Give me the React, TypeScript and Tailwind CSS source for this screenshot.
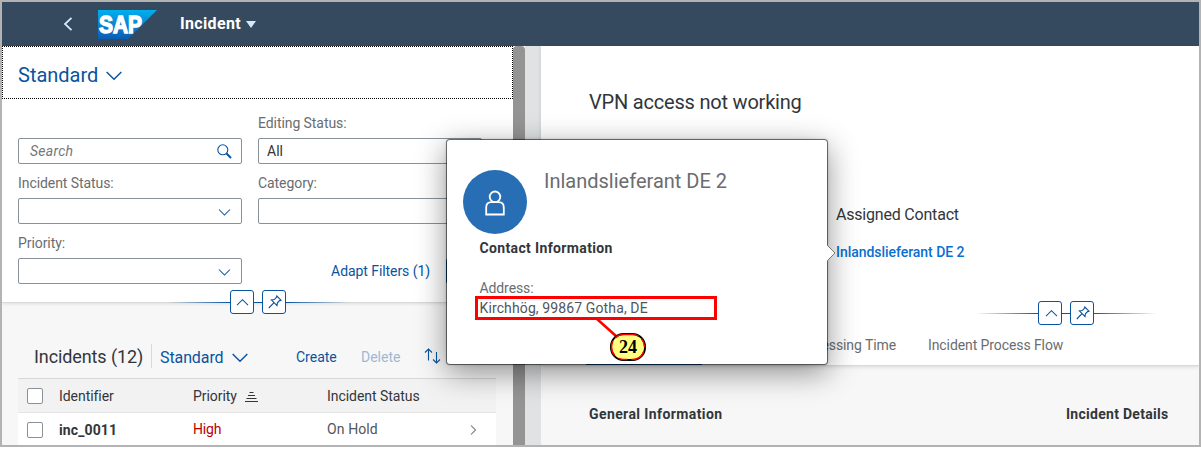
import React from 'react';

function Chevron({ className, d = 'M1 1.5 L6.5 7 L12 1.5', box = '0 0 13 9' }: { className: string; d?: string; box?: string }) {
  return (
    <svg viewBox={box} className={className} fill="none" stroke="currentColor" strokeWidth="1.05">
      <path d={d} />
    </svg>
  );
}

function SapLogo() {
  return (
    <svg viewBox="0 0 59 29" className="ml-[25px] h-[29px] w-[59px]">
      <defs>
        <linearGradient id="sap" x1="0" y1="0" x2="0" y2="1">
          <stop offset="0" stopColor="#00b0ef" />
          <stop offset="0.5" stopColor="#0a86d0" />
          <stop offset="1" stopColor="#0a5cb5" />
        </linearGradient>
      </defs>
      <path d="M0 0H59L30 29H0Z" fill="url(#sap)" />
      <text x="1" y="23" fontFamily="Liberation Sans, sans-serif" fontWeight="700" fontSize="23" fill="#fff" stroke="#fff" strokeWidth="1.4" textLength="43" lengthAdjust="spacingAndGlyphs">
        SAP
      </text>
    </svg>
  );
}

function Field({ label, children }: { label?: string; children?: React.ReactNode }) {
  return (
    <div className="flex w-[224px] flex-col">
      <div className="h-[28px] pt-[3px] text-[14px] leading-[20px] tracking-[-0.07px] text-[#6a6d70]">{label}</div>
      <div className="flex h-[26px] items-center justify-between rounded-[2px] border border-[#89919a] bg-white pr-[10px] pl-[8px]">{children}</div>
    </div>
  );
}

function SelectField({ label }: { label: string }) {
  return (
    <Field label={label}>
      <span />
      <Chevron className="mt-[2px] h-[9px] w-[13px] text-[#0854a0]" />
    </Field>
  );
}

function PinIcon() {
  return (
    <svg viewBox="0 0 14 14" className="h-[14px] w-[14px]" fill="none" stroke="currentColor" strokeWidth="1.1">
      <path d="M8.8 1 L13 5.2 L11.6 5.6 L9.4 7.8 L9 10.6 L3.4 5 L6.2 4.6 L8.4 2.4 Z M5.8 7.8 L0.8 13" />
    </svg>
  );
}

function HeaderToggle() {
  return (
    <div className="flex h-[24px] w-[182px] items-center text-[#0854a0]">
      <div className="h-px flex-1 bg-linear-to-r from-transparent to-[#0854a0]" />
      <div className="flex size-[24px] items-center justify-center rounded-[3px] border border-[#0854a0] bg-white">
        <Chevron className="ml-[2px] h-[9px] w-[13px]" d="M1 7.2 L6.5 1.7 L12 7.2" />
      </div>
      <div className="h-px w-[8px] bg-[#0854a0]" />
      <div className="flex size-[24px] items-center justify-center rounded-[3px] border border-[#0854a0] bg-white pl-[2px]">
        <PinIcon />
      </div>
      <div className="h-px flex-1 bg-linear-to-r from-[#0854a0] to-transparent" />
    </div>
  );
}

function Checkbox() {
  return <span className="block size-[16px] rounded-[2px] border border-[#89919a] bg-white" />;
}

function ListPanel() {
  return (
    <div className="flex w-[511px] flex-col bg-[#f7f7f7]">
      <div className="flex h-[257px] flex-col border-b border-[#d9d9d9] bg-white shadow-[0_1px_3px_rgba(0,0,0,0.1)]">
        <div className="flex h-[53px] shrink-0 items-center border border-dotted border-black pl-[15px] text-[20px] text-[#0854a0]">
          <span className="mt-[4px]">Standard</span>
          <Chevron className="mt-[7px] ml-[7px] h-[12px] w-[18px]" />
        </div>
        <div className="grid grid-cols-[224px_224px] gap-x-[16px] gap-y-[6px] pt-[11px] pl-[16px]">
          <Field>
            <span className="ml-[3px] text-[14px] tracking-[0.25px] text-[#74777a] italic">Search</span>
            <svg viewBox="0 0 15 15" className="mr-[-1px] size-[15px]" fill="none" stroke="#0854a0">
              <circle cx="5.8" cy="5.8" r="5" strokeWidth="1.1" />
              <path d="M9.5 9.5 L14 14" strokeWidth="2" />
            </svg>
          </Field>
          <Field label="Editing Status:">
            <span className="text-[14px] text-[#32363a]">All</span>
          </Field>
          <SelectField label="Incident Status:" />
          <SelectField label="Category:" />
          <SelectField label="Priority:" />
          <div className="flex items-end justify-end">
            <span className="mr-[16px] pb-[3px] text-[14px] leading-[20px] tracking-[-0.07px] text-[#0854a0]">Adapt Filters (1)</span>
            <span className="h-[26px] w-[36px] rounded-[3px] bg-[#0854a0]" />
          </div>
        </div>
      </div>
      <div className="z-10 -mt-[13px] flex justify-center">
        <HeaderToggle />
      </div>
      <div className="mt-[20px] flex h-[44px] shrink-0 items-center pl-[32px]">
        <span className="w-[117px] text-[18px] tracking-[-0.1px] text-[#32363a]">Incidents (12)</span>
        <span className="h-[24px] w-px bg-[#d9d9d9]" />
        <span className="ml-[8px] w-[71px] pt-[3px] text-[16px] tracking-[-0.1px] text-[#0854a0]">Standard</span>
        <Chevron className="mt-[4px] h-[12px] w-[18px] text-[#0854a0]" />
        <span className="ml-[47px] w-[65px] pt-[3px] text-[14px] text-[#0854a0]">Create</span>
        <span className="w-[63px] pt-[3px] text-[14px] text-[#9fb9d3]">Delete</span>
        <svg viewBox="0 0 17 16" className="h-[16px] w-[17px]" fill="none" stroke="#0854a0" strokeWidth="1.1">
          <path d="M4.5 12.5V1 M1 4.5L4.5 1L8 4.5 M12.5 4V15 M9 11.5L12.5 15L16 11.5" />
        </svg>
      </div>
      <div className="mr-[17px] ml-[16px] flex flex-col border-t border-[#d5d7d9] text-[14px] text-[#32363a]">
        <div className="flex h-[34px] items-center border-b border-[#e4e4e4] bg-[#f2f2f2] pl-[9px]">
          <span className="w-[32px]"><Checkbox /></span>
          <span className="w-[134px] pt-[2px] tracking-[-0.05px]">Identifier</span>
          <span className="flex w-[134px] items-center gap-[8px] pt-[2px] tracking-[-0.05px]">
            Priority
            <svg viewBox="0 0 13 10" className="h-[10px] w-[13px]" stroke="#32363a" fill="none">
              <path d="M4.5 0.5H8.5 M3 3.5H10 M1.5 6.5H11.5 M0 9.5H13" />
            </svg>
          </span>
          <span className="pt-[2px] tracking-[-0.05px]">Incident Status</span>
        </div>
        <div className="flex h-[32px] items-center bg-white pt-[1px] pl-[9px]">
          <span className="w-[32px]"><Checkbox /></span>
          <span className="w-[134px] pt-[1px] font-bold tracking-[0.12px]">inc_0011</span>
          <span className="w-[134px] tracking-[-0.15px] text-[#bb0000]">High</span>
          <span className="w-[143px] tracking-[0.1px] text-[#515559]">On Hold</span>
          <Chevron className="h-[10px] w-[7px] text-[#6a6d70]" box="0 0 7 10" d="M1 0.5 L5.5 5 L1 9.5" />
        </div>
      </div>
    </div>
  );
}

function DetailPanel() {
  return (
    <div className="flex w-[658px] flex-col bg-[#f7f7f7]">
      <div className="flex h-[320px] flex-col border-b border-[#d9d9d9] bg-white shadow-[0_1px_4px_rgba(0,0,0,0.12)]">
        <div className="pt-[41px] pl-[48px] text-[20px] leading-[30px] tracking-[-0.2px] text-[#32363a]">VPN access not working</div>
        <div className="mt-[86px] pl-[295px] text-[16px] leading-[24px] tracking-[-0.2px] text-[#32363a]">Assigned Contact</div>
        <div className="mt-[15px] pl-[295px] text-[14px] leading-[20px] font-medium tracking-[-0.04px] text-[#0a6ed1]">Inlandslieferant DE 2</div>
        <div className="mt-[39px] ml-[434px]">
          <HeaderToggle />
        </div>
        <div className="flex items-start text-[14px] leading-[20px] tracking-[-0.09px] text-[#6a6d70]">
          <span className="mt-[38px] ml-[45px] h-[2px] w-[116px] bg-[#0854a0]" />
          <span className="mt-[10px] w-[194px] text-right">Processing Time</span>
          <span className="mt-[10px] ml-[32px]">Incident Process Flow</span>
        </div>
      </div>
      <div className="flex pt-[38px] pl-[48px] text-[14px] leading-[20px] font-bold text-[#32363a]">
        <span className="w-[477px] tracking-[0.4px]">General Information</span>
        <span className="tracking-[0.28px]">Incident Details</span>
      </div>
    </div>
  );
}

function ContactPopover() {
  return (
    <div className="absolute top-[139px] left-[446px] z-20 flex h-[226px] w-[382px] flex-col rounded-[4px] border border-black/50 bg-white bg-clip-padding pt-[30px] pl-[16px] shadow-[0_8px_30px_rgba(0,0,0,0.42),0_0_3px_rgba(0,0,0,0.15)]">
      <div className="flex h-[64px]">
        <div className="flex size-[64px] items-center justify-center rounded-full bg-[#286eb4]">
          <svg viewBox="0 0 20 26" className="mt-[1px] h-[26px] w-[20px]" fill="none" stroke="#fff" strokeWidth="1.8">
            <circle cx="10" cy="6.8" r="5.3" />
            <path d="M6.5 12.2 H13.5 C17 12.2 18.8 14.2 18.8 17.5 V24.5 H1.2 V17.5 C1.2 14.2 3 12.2 6.5 12.2 Z" />
          </svg>
        </div>
        <span className="-mt-[4px] ml-[17px] text-[20px] leading-[30px] text-[#6a6d70]">Inlandslieferant DE 2</span>
      </div>
      <div className="mt-[4px] pl-[16.5px] text-[14px] leading-[20px] text-[#32363a]">
        <div className="font-bold tracking-[0.36px]">Contact Information</div>
        <div className="mt-[20px] tracking-[-0.1px] text-[#6a6d70]">Address:</div>
        <div className="tracking-[0.12px] text-[#515559]">Kirchhög, 99867 Gotha, DE</div>
      </div>
      <svg viewBox="0 0 9 16" className="absolute top-[105px] -right-[9px] h-[16px] w-[9px]">
        <path d="M0 0L8 8L0 16Z" fill="#fff" />
        <path d="M0.5 0.5L8 8L0.5 15.5" fill="none" stroke="#777" />
      </svg>
    </div>
  );
}

function Callout() {
  return (
    <>
      <div className="absolute top-[296px] left-[475px] z-30 h-[24px] w-[242px] border-[3px] border-[#f00]" />
      <svg viewBox="0 0 60 44" className="absolute top-[318px] left-[594px] z-30 h-[44px] w-[60px]">
        <path d="M3 1L22 18" stroke="#f00" strokeWidth="2.6" />
        <rect x="17" y="16" width="34" height="26" rx="12.5" fill="#ffff80" stroke="#000" strokeWidth="2" />
        <rect x="17.6" y="16.6" width="32.8" height="24.8" rx="12" fill="none" stroke="#f00" strokeWidth="1.5" strokeDasharray="15 4 9 5" />
        <text x="34" y="35" textAnchor="middle" fontFamily="Liberation Serif, serif" fontWeight="700" fontSize="18">24</text>
      </svg>
    </>
  );
}

export default function App() {
  return (
    <div className="h-[449px] w-[1201px] overflow-hidden bg-white font-['Roboto',sans-serif]">
      <div className="relative flex h-[447px] flex-col overflow-hidden border-2 border-[#b3b3b3]">
        <header className="flex h-[44px] shrink-0 items-center bg-[#354a5f] pl-[61px] text-[#d1e8ff]">
          <svg viewBox="0 0 10 14" className="h-[14px] w-[10px]" fill="none" stroke="currentColor" strokeWidth="1.8">
            <path d="M8.5 0.8L2 7L8.5 13.2" />
          </svg>
          <SapLogo />
          <span className="ml-[23px] text-[16px] font-bold tracking-[0.35px] text-white">Incident</span>
          <svg viewBox="0 0 10 7" className="ml-[5px] h-[7px] w-[10px]"><path d="M0 0H10L5 7Z" fill="currentColor" /></svg>
        </header>
        <div className="flex flex-1">
          <ListPanel />
          <div className="w-[12px] rounded-t-[4px] bg-[#949494]" />
          <div className="w-[16px] bg-[#dfe3e4]" />
          <DetailPanel />
        </div>
        <div className="absolute -top-[2px] -left-[2px] h-0 w-0">
          <ContactPopover />
          <Callout />
        </div>
      </div>
    </div>
  );
}
